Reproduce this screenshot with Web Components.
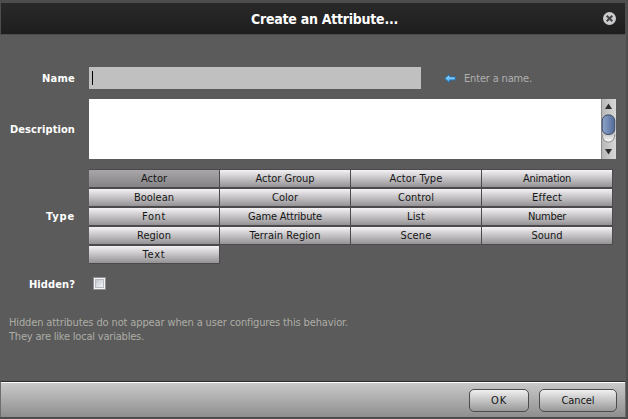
<!DOCTYPE html>
<html lang="en">
<head>
<meta charset="utf-8">
<title>Create an Attribute...</title>
<style>
html,body{margin:0;height:100%;overflow:hidden;background:#4d4d4d}
body{font:11px/14px Tahoma,"DejaVu Sans Condensed","Noto Sans",sans-serif}
</style>
</head>
<body>
<attribute-dialog></attribute-dialog>
<script>
const attach = (el, html) => { el.attachShadow({mode:'open'}).innerHTML = html; };

/* One line of text tracked to a given width (attribute w, in px). */
customElements.define('text-run', class extends HTMLElement {
  connectedCallback() {
    attach(this, `<style>:host{display:inline-block;white-space:nowrap}span{display:inline-block}</style><span><slot></slot></span>`);
    const s = this.shadowRoot.querySelector('span');
    const w = +this.getAttribute('w'), n = this.textContent.length;
    if (w) {
      const gap = (w - s.getBoundingClientRect().width) / n;
      s.style.letterSpacing = gap.toFixed(3) + 'px';
    }
  }
});

customElements.define('title-bar', class extends HTMLElement {
  connectedCallback() {
    attach(this, `<style>
      :host{display:grid;grid-template-columns:1fr auto 1fr;align-items:center;height:31px;margin:0 3px 0 1px;
        background:linear-gradient(#292929,#1e1e1e);color:#fff;font-size:14px;font-weight:bold;line-height:16px}
      .t{grid-column:2;padding-left:23px}
      svg{justify-self:end;margin-right:9px;display:block}
    </style><span class="t"><slot></slot></span>
    <svg width="13" height="13" viewBox="0 0 13 13"><circle cx="6.5" cy="6.5" r="6.5" fill="#ccc"/><path d="M3.7 3.7l5.6 5.6M9.3 3.7l-5.6 5.6" stroke="#414346" stroke-width="2"/></svg>`);
  }
});

customElements.define('form-row', class extends HTMLElement {
  connectedCallback() {
    attach(this, `<style>
      :host{display:flex;align-items:center}
      .l{width:75px;margin-right:14px;padding-top:1px;text-align:right;color:#fff;font-weight:bold;flex:none}
    </style><span class="l"><text-run w="${this.getAttribute('w')}">${this.getAttribute('label')}</text-run></span><slot></slot>`);
  }
});

customElements.define('name-field', class extends HTMLElement {
  connectedCallback() {
    attach(this, `<style>:host{display:flex;align-items:center;width:332px;height:22px;background:#c0c0c0}
      i{width:1px;height:14px;margin-left:3px;background:#000}</style><i></i>`);
  }
});

customElements.define('field-hint', class extends HTMLElement {
  connectedCallback() {
    attach(this, `<style>:host{display:flex;align-items:center;gap:8px;margin-left:23px;padding-top:1px;color:#b0b0b0}svg{display:block;flex:none}</style>
    <svg width="12" height="10" viewBox="0 0 12 10"><path d="M.7 4.5L5.5.5V3h5.7v3H5.5v2.6z" fill="#62bdfb" stroke="#2673b5"/><path d="M2.2 4.4L4.9 2.2V4H10.6" fill="none" stroke="#a7dcff" stroke-width=".7"/></svg><slot></slot>`);
  }
});

customElements.define('text-box', class extends HTMLElement {
  connectedCallback() {
    attach(this, `<style>
      :host{display:flex;justify-content:flex-end;width:527px;height:60px;background:#fff}
      svg{display:block}
    </style>
    <svg width="15" height="60" viewBox="0 0 15 60">
      <defs>
        <linearGradient id="t"><stop offset="0" stop-color="#b5b5b5"/><stop offset="1" stop-color="#d8d8d8"/></linearGradient>
        <linearGradient id="b"><stop offset="0" stop-color="#8fa5c9"/><stop offset=".5" stop-color="#6f88b2"/><stop offset="1" stop-color="#506894"/></linearGradient>
        <linearGradient id="w" x2="0" y2="1"><stop offset=".6" stop-color="#aaa"/><stop offset="1" stop-color="#fff"/></linearGradient>
      </defs>
      <path d="M0 0h15v60H0z" fill="url(#t)"/><path d="M0 0h1v60H0z" fill="#8d8d8d"/>
      <rect x="1" y="15" width="13" height="28" rx="6.5" fill="url(#w)"/>
      <path d="M1.2 35.5c0 10 12.6 10 12.6 0" fill="none" stroke="#858585"/>
      <rect x="1.2" y="16" width="12.6" height="19.5" rx="5.8" fill="url(#b)" stroke="#414f69"/>
      <path d="M4 10L7.5 4.5 11 10zM4 50L7.5 55.5 11 50z" fill="#2d2d2d"/>
    </svg>`);
  }
});

customElements.define('type-cell', class extends HTMLElement {
  connectedCallback() {
    attach(this, `<style>
      :host{display:flex;justify-content:center;height:17px;border:solid #4b494b;border-width:1px 1px 1px 0;
        background:linear-gradient(#f4f2f4,#949294);color:#161616;line-height:18px}
      :host([selected]){background:linear-gradient(#a8a6a8,#858385)}
    </style><slot></slot>`);
  }
});

customElements.define('type-grid', class extends HTMLElement {
  connectedCallback() {
    const types = [['Actor',26],['Actor Group',59],['Actor Type',53],['Animation',48],['Boolean',40],['Color',26],['Control',36],['Effect',30],
      ['Font',24],['Game Attribute',74],['List',18],['Number',38],['Region',34],['Terrain Region',71],['Scene',31],['Sound',31],['Text',23]];
    attach(this, `<style>:host{display:grid;grid-template-columns:repeat(4,131px)}</style>` +
      types.map(([t,w],i) => `<type-cell${i ? '' : ' selected'}><text-run w="${w}">${t}</text-run></type-cell>`).join(''));
  }
});

customElements.define('check-box', class extends HTMLElement {
  connectedCallback() {
    attach(this, `<style>:host{display:block;box-sizing:border-box;width:13px;height:13px;margin:0 0 2px 4px;border:1px solid #8e8f8f;background:#f4f4f4;padding:1px}
      i{display:block;box-sizing:border-box;width:9px;height:9px;border:1px solid #b6bac0;background:linear-gradient(135deg,#c3c7cf,#f4f4f5)}</style><i></i>`);
  }
});

customElements.define('push-button', class extends HTMLElement {
  connectedCallback() {
    attach(this, `<style>:host{display:flex;justify-content:center;align-items:center;box-sizing:border-box;height:23px;
      border:1px solid #4c4c4c;border-radius:5px;background:linear-gradient(#f0f0f0,#989898);color:#161616}</style><slot></slot>`);
  }
});

customElements.define('button-bar', class extends HTMLElement {
  connectedCallback() {
    attach(this, `<style>:host{display:flex;justify-content:flex-end;gap:10px;box-sizing:border-box;height:36px;padding:7px 8px 0 0;
      border-top:1px solid #2b2b2b;background:linear-gradient(#fff 1px,#c9c9c9 1px,#8e8e8e);border-left:1px solid #6d6d6d;border-right:1px solid #6d6d6d}
      ::slotted(:first-child){width:60px}::slotted(:last-child){width:78px}</style><slot></slot>`);
  }
});

customElements.define('attribute-dialog', class extends HTMLElement {
  connectedCallback() {
    attach(this, `<style>
      :host{display:flex;flex-direction:column;box-sizing:border-box;width:628px;height:419px;padding:3px 0 2px;background:#4d4d4d}
      main{flex:1;margin:1px 2px 0 0;padding-top:32px;background:#5b5b5b}
      .d{margin-top:10px}.g{margin-top:10px}.h{margin-top:13px}
      .note{margin:24px 0 0 9px;color:#adada6;display:flex;flex-direction:column;align-items:flex-start}
      button-bar{margin-right:2px}
    </style>
    <title-bar><text-run w="147">Create an Attribute...</text-run></title-bar>
    <main>
      <form-row label="Name" w="33"><name-field></name-field><field-hint><text-run w="68">Enter a name.</text-run></field-hint></form-row>
      <form-row class="d" label="Description" w="65"><text-box></text-box></form-row>
      <form-row class="g" label="Type" w="29"><type-grid></type-grid></form-row>
      <form-row class="h" label="Hidden?" w="46"><check-box></check-box></form-row>
      <div class="note"><text-run w="339">Hidden attributes do not appear when a user configures this behavior.</text-run><text-run w="135">They are like local variables.</text-run></div>
    </main>
    <button-bar><push-button><text-run w="16">OK</text-run></push-button><push-button><text-run w="33">Cancel</text-run></push-button></button-bar>`);
  }
});
</script>
</body>
</html>
